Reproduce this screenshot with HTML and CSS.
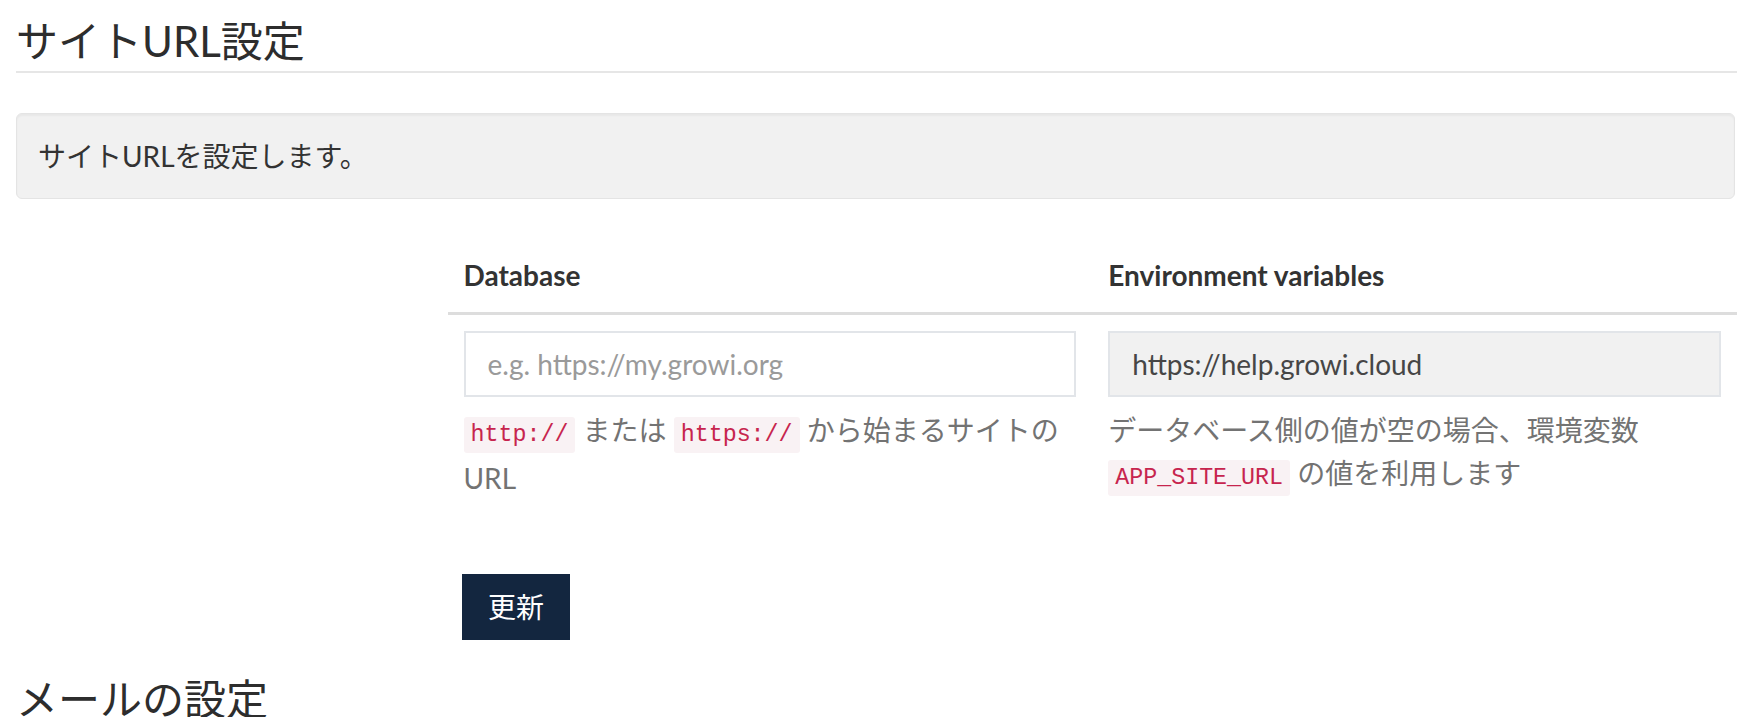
FILE: index.html
```html
<!DOCTYPE html>
<html lang="ja">
<head>
<meta charset="utf-8">
<title>サイトURL設定</title>
<link rel="stylesheet" href="styles.css">
</head>
<body>
<div class="page">
  <h2 class="section-title">サイトURL設定</h2>
  <div class="well">サイトURLを設定します。</div>

  <div class="form-grid">
    <div class="form-spacer"></div>
    <div class="form-main">
      <table class="settings-table">
        <thead>
          <tr>
            <th>Database</th>
            <th>Environment variables</th>
          </tr>
        </thead>
        <tbody>
          <tr>
            <td>
              <input class="form-control" type="text" placeholder="e.g. https://my.growi.org">
              <p class="help-block"><code>http://</code> または <code>https://</code> から始まるサイトの URL</p>
            </td>
            <td>
              <input class="form-control readonly" type="text" value="https://help.growi.cloud" readonly>
              <p class="help-block">データベース側の値が空の場合、環境変数 <code>APP_SITE_URL</code> の値を利用します</p>
            </td>
          </tr>
        </tbody>
      </table>
      <div class="actions">
        <button class="btn-primary" type="button">更新</button>
      </div>
    </div>
  </div>

  <h2 class="section-title next">メールの設定</h2>
</div>
</body>
</html>
```

FILE: styles.css
```css
html, body {
  margin: 0;
  padding: 0;
  background: #ffffff;
}

body {
  font-family: Lato, "Noto Sans CJK JP", sans-serif;
  font-size: 28px;
  line-height: 42px;
  color: #333333;
  overflow: hidden;
}

.page {
  padding-left: 16px;
}

.section-title {
  margin: 16px 0 0;
  padding-bottom: 5px;
  font-size: 42px;
  line-height: 50px;
  font-weight: 400;
  color: #2d2d2d;
  border-bottom: 2px solid #e6e6e6;
}

.section-title.next {
  margin-top: 34px;
  border-bottom: none;
}

.well {
  margin: 40px 2px 0 0;
  padding: 21px;
  background: #f1f1f1;
  border: 1px solid #e4e4e4;
  border-radius: 6px;
  box-shadow: inset 0 2px 2px rgba(0, 0, 0, 0.04);
}

.form-grid {
  display: grid;
  grid-template-columns: 431.5px 1fr;
  margin-top: 41px;
}

.settings-table {
  width: 100%;
  table-layout: fixed;
  border-collapse: collapse;
}

.settings-table th {
  padding: 14px 16px 16px;
  text-align: left;
  font-weight: 700;
  border-bottom: 3px solid #dddddd;
}

.settings-table td {
  padding: 16px 16px 14px;
  vertical-align: top;
}

.form-control {
  display: block;
  box-sizing: border-box;
  width: 100%;
  height: 66px;
  margin: 0;
  padding: 0 22px;
  font: inherit;
  font-size: 28px;
  line-height: 42px;
  color: #464646;
  background: #ffffff;
  border: 2px solid #e2e5e9;
  border-radius: 0;
  outline: none;
}

.form-control::placeholder {
  color: #9a9a9a;
}

.form-control.readonly {
  background: #f1f1f1;
}

.help-block {
  margin: 12px 0 0;
  line-height: 43px;
  color: #737373;
}

code {
  font-family: "Liberation Mono", "DejaVu Sans Mono", monospace;
  font-size: 23.3px;
  padding: 5px 7px;
  color: #c7254e;
  background: #f9f2f4;
  border-radius: 3px;
}

.actions {
  margin-top: 60px;
  padding-left: 14.5px;
}

.btn-primary {
  display: inline-block;
  margin: 0;
  padding: 10px 24px;
  font: inherit;
  font-size: 28px;
  line-height: 42px;
  color: #ffffff;
  background: #13263f;
  border: 2px solid #13263f;
  border-radius: 0;
}
```
